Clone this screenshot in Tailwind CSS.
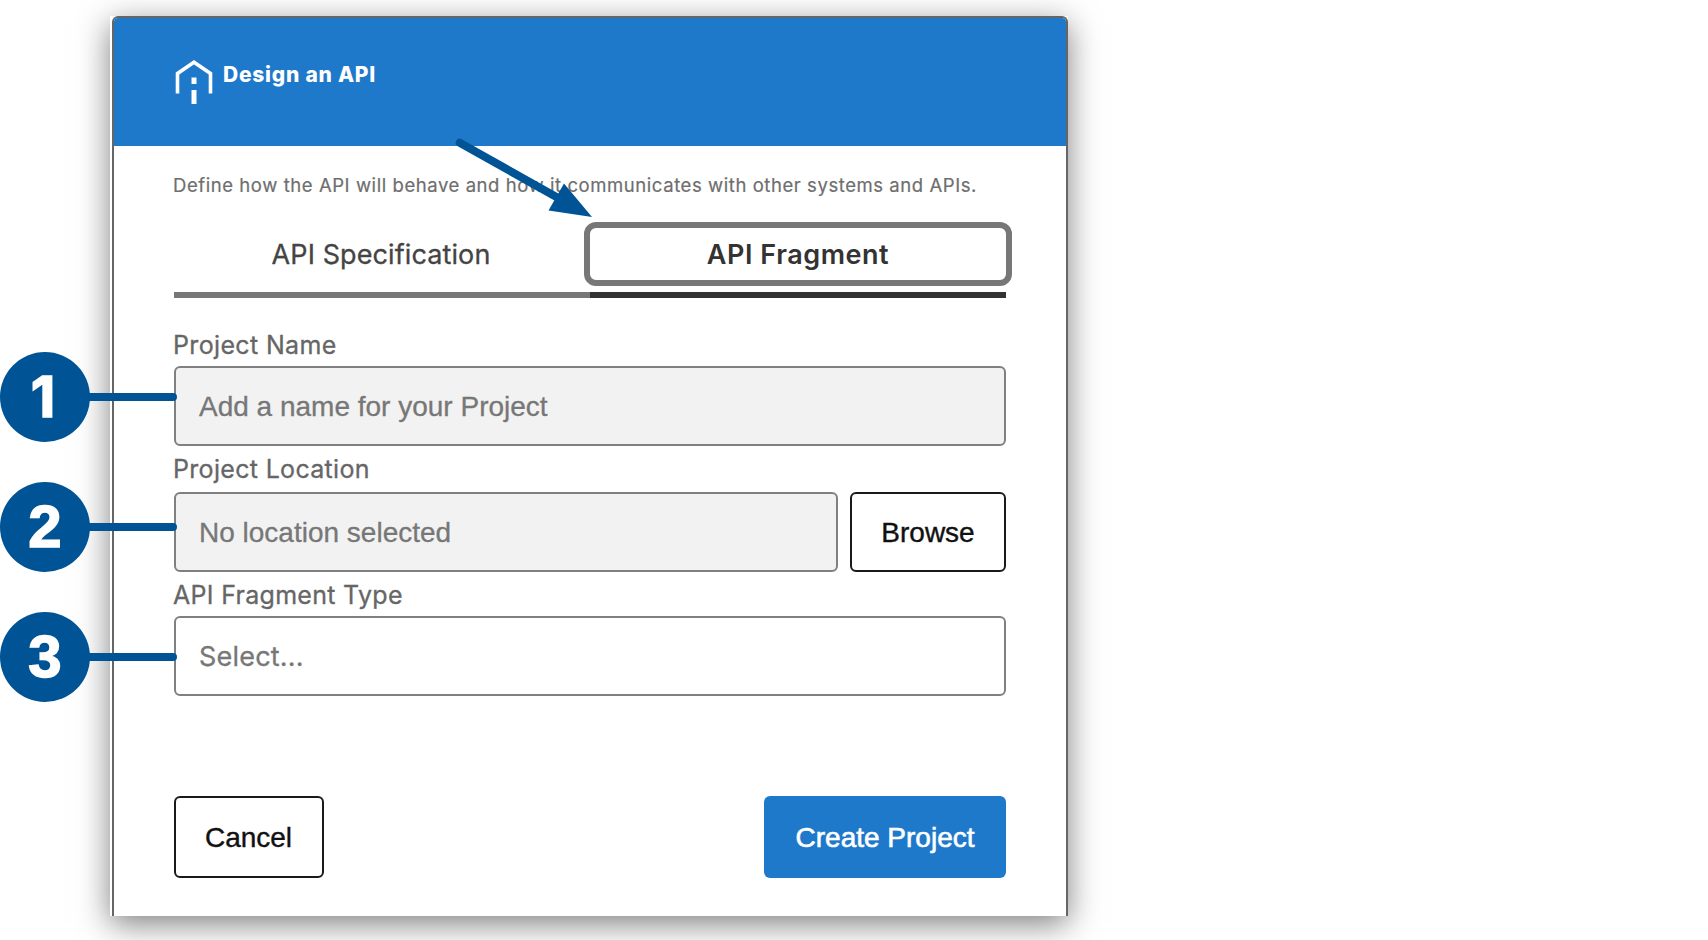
<!DOCTYPE html>
<html lang="en">
<head>
<meta charset="utf-8">
<title>Design an API</title>
<script src="https://cdn.jsdelivr.net/npm/@tailwindcss/browser@4"></script>
</head>
<body class="relative h-[940px] w-[1708px] overflow-hidden bg-white font-[Inter,sans-serif]">
<main class="ml-[110px] mt-[16px] h-[900px] w-[958px] bg-white pl-[2px] shadow-[0_8px_30px_rgba(0,0,0,0.5)]">
  <div class="h-[900px] overflow-hidden rounded-t-[6px] border-x-2 border-t-2 border-[#666]">
    <header class="flex h-[128px] items-start bg-[#1f79cb] pl-[61px] pt-[41px] text-white">
      <svg class="h-[46px] w-[38px] shrink-0" viewBox="0 0 38 46" fill="none" stroke="#fff"><path d="M2.500 34.500V14.500L19 3.200L35.500 14.500V34.500" stroke-width="3.600"/><path d="M19 18.500V25M19 31V45" stroke-width="5"/></svg>
      <h1 class="ml-[10px] mt-[4px] whitespace-nowrap text-[21px] font-extrabold leading-[24px] tracking-[0.750px]">Design an API</h1>
    </header>
    <div class="flex flex-col px-[60px]">
      <p class="-ml-[1px] mt-[27px] h-[24px] whitespace-nowrap text-[18.500px] leading-[24px] tracking-[0.565px] text-[#6e6e6e] [-webkit-text-stroke:0.200px_#6e6e6e]">Define how the API will behave and how it communicates with other systems and APIs.</p>
      <nav class="mt-[25px] grid h-[76px] grid-cols-2 text-[27px] leading-[56px] text-[#444]">
        <button class="flex justify-center border-b-6 border-[#777] pr-[2px] pt-[5px] tracking-[0.1px] [-webkit-text-stroke:0.300px_#444]">API Specification</button>
        <button class="relative flex justify-center border-b-6 border-[#333] pt-[5px] font-semibold tracking-[0.550px] text-[#333]"><i class="absolute -left-[6px] -right-[6px] top-0 h-[64px] rounded-[12px] border-6 border-[#777]"></i>API Fragment</button>
      </nav>
      <label class="-ml-[1px] mt-[32px] h-[30px] text-[25px] leading-[30px] tracking-[0.350px] text-[#666] [-webkit-text-stroke:0.300px_#666]">Project Name</label>
      <div class="mt-[6px] flex h-[80px] items-center rounded-[6px] border-2 border-[#808080] bg-[#f2f2f2] pl-[23px] pt-[2px] font-['Liberation_Sans',sans-serif] text-[28px] text-[#777] [-webkit-text-stroke:0.300px_#777]">Add a name for your Project</div>
      <label class="-ml-[1px] mt-[8px] h-[30px] text-[25px] leading-[30px] tracking-[0.320px] text-[#666] [-webkit-text-stroke:0.300px_#666]">Project Location</label>
      <div class="mt-[8px] flex h-[80px] gap-[12px] font-['Liberation_Sans',sans-serif] text-[28px]">
        <div class="flex flex-1 items-center rounded-[6px] border-2 border-[#808080] bg-[#f2f2f2] pl-[23px] pt-[2px] text-[#777] [-webkit-text-stroke:0.300px_#777]">No location selected</div>
        <button class="w-[156px] rounded-[6px] border-2 border-[#1a1a1a] pt-[2px] text-[#111] [-webkit-text-stroke:0.400px_#111]">Browse</button>
      </div>
      <label class="-ml-[1px] mt-[8px] h-[30px] text-[25px] leading-[30px] tracking-[0.300px] text-[#666] [-webkit-text-stroke:0.300px_#666]">API Fragment Type</label>
      <div class="mt-[6px] flex h-[80px] items-center rounded-[6px] border-2 border-[#808080] bg-white pl-[23px] pt-[2px] text-[27px] tracking-[0.200px] text-[#777] [-webkit-text-stroke:0.300px_#777]">Select...</div>
      <footer class="mt-[100px] flex h-[82px] justify-between font-['Liberation_Sans',sans-serif] text-[28px]">
        <button class="w-[150px] rounded-[6px] border-2 border-[#1a1a1a] pr-[1px] pt-[2px] text-[#111] [-webkit-text-stroke:0.400px_#111]">Cancel</button>
        <button class="w-[242px] rounded-[6px] bg-[#1f79cb] pt-[2px] text-white [-webkit-text-stroke:0.600px_#fff]">Create Project</button>
      </footer>
    </div>
  </div>
</main>
<svg class="absolute left-0 top-0 h-[940px] w-[1100px]" viewBox="0 0 1100 940" fill="#005495" stroke="#005495" stroke-width="8" stroke-linecap="round">
  <path d="M459.700 142.700L560 199M60 397H173M60 527H173M60 657H173"/>
  <path d="M592 217L564 183.500L548.500 210.500Z" stroke="none"/>
</svg>
<div class="absolute left-0 top-[352px] flex flex-col gap-[40px] font-['Liberation_Sans',sans-serif] text-[60px] font-bold text-white [-webkit-text-stroke:1.500px_#fff]">
  <div class="flex size-[90px] items-center justify-center rounded-full bg-[#005495] pr-[4px] font-[Inter,sans-serif] text-[57px]">1</div>
  <div class="flex size-[90px] items-center justify-center rounded-full bg-[#005495]">2</div>
  <div class="flex size-[90px] items-center justify-center rounded-full bg-[#005495]">3</div>
</div>
</body>
</html>
